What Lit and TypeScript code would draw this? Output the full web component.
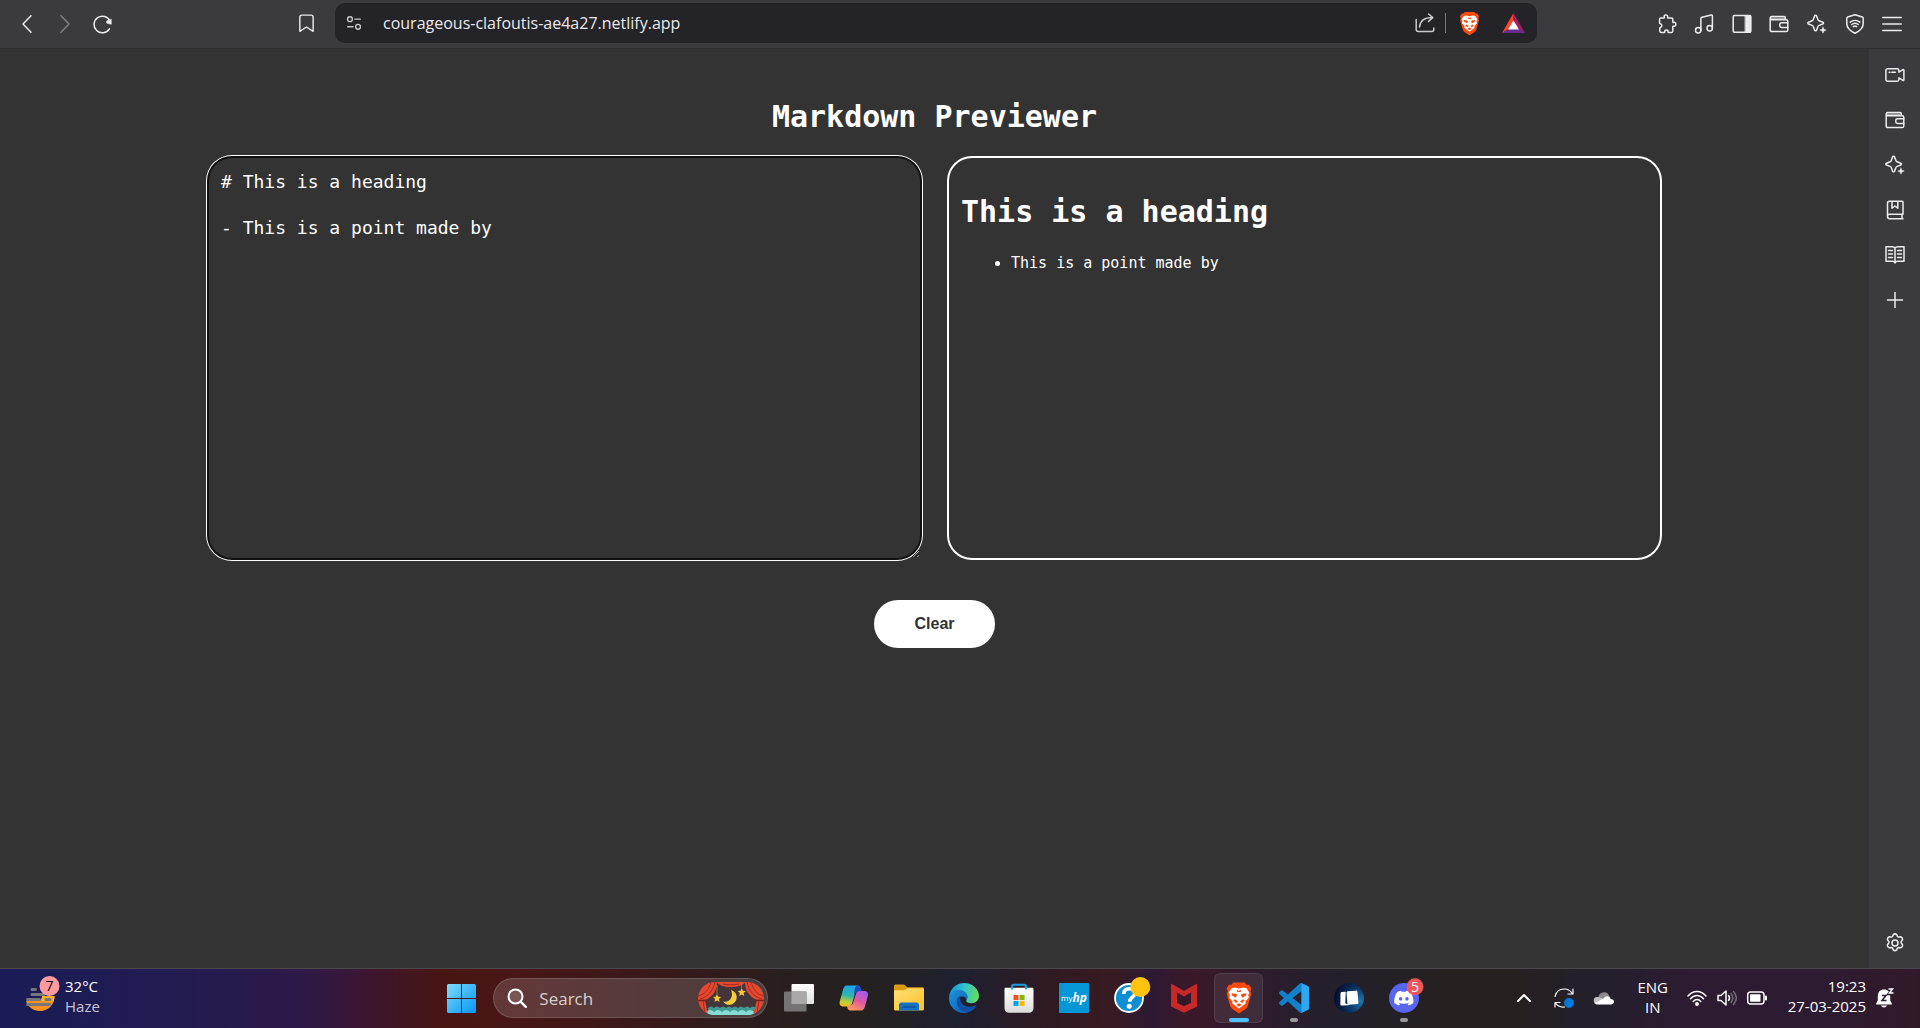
import { LitElement, html, svg, css } from "lit";
import { customElement, state } from "lit/decorators.js";

const line = (body: unknown, size = 20) => html`<svg
  class="line"
  width=${size}
  height=${size}
  viewBox="0 0 20 20"
  aria-hidden="true"
>${body}</svg>`;

const art = (body: unknown) => html`<svg
  class="art"
  width="30"
  height="30"
  viewBox="0 0 30 30"
  aria-hidden="true"
>${body}</svg>`;

const sparkle = svg`
  <path d="M8.6 1.2c.5 0 .8.3 1 .8l1.3 3.6c.2.6.6 1 1.2 1.200l3.700 1.400c.9.3.9 1.500 0 1.800l-3.700 1.400c-.6.2-1 .6-1.200 1.200l-1.300 3.600c-.4.9-1.600.9-2 0l-1.300-3.600c-.2-.6-.6-1-1.200-1.200l-3.600-1.400c-.9-.3-.9-1.500 0-1.800l3.600-1.400c.6-.2 1-.6 1.200-1.200l1.300-3.600c.2-.5.5-.8 1-.8z"/>
  <path class="solid" d="M16 13l.9 2.200 2.300.8-2.300.9-.9 2.300-.9-2.300-2.300-.9 2.300-.8z"/>`;

const wallet = svg`
  <path class="dim" d="M1.500 3.500h14.500v2.200h-14.500z"/>
  <path d="M1.200 4v11.800c0 1.100.7 1.800 1.700 1.800h14.200c1 0 1.700-.7 1.700-1.700v-8.400c0-1-.7-1.700-1.700-1.700h-14.200c-1 0-1.700-.6-1.700-1.600s.7-1.600 1.700-1.600h12c.9 0 1.500.6 1.500 1.500v1.500"/>
  <path d="M18.800 8.800h-6.300c-1 0-1.700.7-1.700 1.700v1.300c0 1 .7 1.700 1.700 1.700h6.300"/>`;

const lion = svg`
  <path d="M8.500 0h11l2.500 2.600 2.200-.3 2.200 3.700-1 2.500.9 3-3.700 12.500c-.3 1-1 1.800-2 2.500l-6.600 4.500-6.600-4.500c-1-.7-1.700-1.500-2-2.500l-3.700-12.500.9-3-1-2.500 2.200-3.700 2.200.3z" transform="translate(1 -.5)" fill="#fb4a0a"/>
  <path d="M7.500 5.200l3.400-.6 4.100 1 4.100-1 3.400.6 2.900 4.600-1.200 2 .6 3-3.300 3.400.2 2.200-6.700 5.200-6.700-5.200.2-2.200-3.300-3.400.6-3-1.200-2z" fill="#fff"/>
  <path d="M7.600 10.300l4.700.8.700 1.200-1.300 2.400-3.600-2.100zM22.400 10.300l-4.700.8-.7 1.200 1.300 2.400 3.600-2.100zM12.800 6.800l2.200 1.100 2.200-1.100-.6 2.300h-3.200zM11 16.200l3 2.200-2.500 1.900-.3-1.500-2-1.300zM19 16.200l-3 2.200 2.500 1.900.3-1.500 2-1.300zM12.300 21.800l2.700-1.500 2.700 1.500-2.700 2z" fill="#fb4a0a"/>`;

const toolIcons = [
  {
    name: "Extensions",
    body: svg`<path d="M3.400 4h3.600c.3 0 .5-.4.3-.8-.5-1.100.2-2.300 1.600-2.300s2.200 1.200 1.700 2.300c-.2.400 0 .8.400.8h3.500c.8 0 1.300.5 1.300 1.300v2.800c0 .4.4.6.8.4 1.100-.5 2.300.3 2.300 1.800s-1.200 2.300-2.300 1.800c-.4-.2-.8 0-.8.500v4.400c0 .8-.5 1.400-1.300 1.400h-3c-.4 0-.6-.4-.5-.8.300-1-.5-1.700-1.600-1.700s-1.900.7-1.600 1.700c.1.4-.1.800-.5.800h-3.200c-.8 0-1.300-.6-1.300-1.400v-2.800c0-.4.2-.7.600-.8.900-.2 1.400-.9 1.400-1.800s-.6-1.700-1.500-1.800c-.4-.1-.7-.4-.7-.9v-3.600c0-.8.400-1.300 1.200-1.300z"/>`,
  },
  {
    name: "Media playlist",
    body: svg`<circle cx="4.200" cy="16.300" r="2.700"/><circle cx="15.700" cy="14.200" r="2.700"/><path d="M6.900 16.300V4.400c0-.6.400-1 1-1.200l9.400-2.200c.7-.1 1.100.2 1.100.9v12.300"/>`,
  },
  {
    name: "Sidebar",
    body: svg`<rect x="1.200" y="1.500" width="17.600" height="16.800" rx="1.200"/><path class="solid" d="M13.200 1.500h5.600v16.800h-5.600z"/>`,
  },
  { name: "Wallet", body: wallet },
  { name: "Leo", body: sparkle },
  {
    name: "VPN",
    body: svg`<path d="M10 .7l7.300 2.300c.6.200.9.600.9 1.200v5.600c0 4.200-3.800 7.400-8.200 9.500-4.400-2.100-8.200-5.300-8.200-9.500v-5.600c0-.6.300-1 .9-1.200z"/><path d="M5.200 8.200c2.800-2.300 6.800-2.300 9.600 0M6.700 10.500c2-1.600 4.600-1.600 6.600 0M8.400 12.600c1-.8 2.200-.8 3.200 0"/>`,
  },
  { name: "Menu", body: svg`<path d="M.8 3.500h18.400M.8 10h18.400M.8 16.500h18.400"/>` },
];

const sideIcons = [
  {
    name: "Talk",
    body: svg`<path d="M2.600 3.700h9.600c1 0 1.700.7 1.700 1.700v1.800l4-2.500c.5-.3 1 0 1 .5v9.600c0 .5-.5.800-1 .5l-4-2.500v1.800c0 1-.7 1.700-1.700 1.700h-9.600c-1 0-1.700-.7-1.700-1.700v-9.200c0-1 .7-1.700 1.700-1.700z"/><path d="M4 7.300h1M6.800 7.300h3.600"/>`,
  },
  { name: "Brave Wallet", body: wallet },
  { name: "Leo AI", body: sparkle },
  {
    name: "Bookmarks",
    body: svg`<path d="M18 14.300V2.200c0-.6-.4-1-1-1h-12.500c-1.200 0-2 .8-2 2v13.400c0 1.200.8 2.100 2 2.100h13.500M18 14.300h-13.300c-1.200 0-2.200 1-2.200 2.200M17 14.300v4.400M7 1.200v7l2.900-2.200 2.900 2.200v-7"/>`,
  },
  {
    name: "Reading list",
    body: svg`<path d="M10 3.200c-.6-.9-1.300-1.400-2.500-1.400h-6.500v14.400h6.500c1.200 0 2 .6 2.500 1.800.5-1.200 1.300-1.800 2.500-1.800h6.500v-14.400h-6.500c-1.200 0-1.900.5-2.500 1.400zM10 3.200v14.500M3.500 5.500h4M3.500 9h4M3.500 12.500h4M12.500 5.500h4M12.500 9h4M12.500 12.500h4"/>`,
  },
  { name: "Add", body: svg`<path d="M10 2.500v15M2.500 10h15"/>` },
];

const apps = [
  {
    name: "Task view",
    body: svg`<rect x="7.500" y="1" width="22.500" height="20" rx="1" fill="url(#tv)"/><rect x="0" y="8.500" width="22.500" height="20" rx="1" fill="#757373"/><path d="M7.500 8.500h15v12.500h-15z" fill="#aaa8a8"/>
      <defs><linearGradient id="tv" x1="0" y1="0" x2="0" y2="1"><stop stop-color="#fff"/><stop offset="1" stop-color="#e0e0e0"/></linearGradient></defs>`,
  },
  {
    name: "Copilot",
    body: svg`<defs>
        <linearGradient id="c1" x1=".4" y1="0" x2=".2" y2="1"><stop stop-color="#1ea2ee"/><stop offset=".45" stop-color="#2bb6b0"/><stop offset=".75" stop-color="#b5cf3a"/><stop offset="1" stop-color="#f2bd1d"/></linearGradient>
        <linearGradient id="c2" x1=".8" y1="0" x2=".3" y2="1"><stop stop-color="#9c5cf0"/><stop offset=".5" stop-color="#e356a8"/><stop offset="1" stop-color="#ff9a5a"/></linearGradient></defs>
      <path d="M7.500 2.500h11c1.700 0 2.600 1 3 2.500l.9 3h-3.400c-1.600 0-2.500.8-3 2.400l-3 10c-.7 2.200-1.800 3.100-4 3.100h-4.500c-3.200 0-4.500-2.100-3.600-5.500l3-11c.8-2.900 1.900-4.500 3.600-4.500z" fill="url(#c1)"/>
      <path d="M17.500 2.500h1c1.700 0 2.600 1 3 2.500l.9 3h-3.400c-1.600 0-2.500.8-3 2.400l-.6 2c-.5-3-.3-7.300 2.100-9.900z" fill="#184cc4"/>
      <path d="M22.500 27.500h-11c-1.700 0-2.600-1-3-2.500l-.7-2.500h3c1.600 0 2.700-.9 3.200-2.500l3.100-9.600c.6-1.700 1.500-2.400 3.200-2.400h5c3.200 0 4.300 2.100 3.400 5.500l-2.600 9.500c-.8 2.900-1.900 4.500-3.600 4.500z" fill="url(#c2)"/>`,
  },
  {
    name: "File Explorer",
    body: svg`<path d="M0 3c0-.9.700-1.600 1.600-1.600h7.400c.8 0 1.300.2 1.900.7l2.100 2.200h15.400c.9 0 1.600.7 1.600 1.600v5h-30z" fill="#dc9a0d"/>
      <path d="M0 8.500c0-.8.500-1.300 1.300-1.300h8.500c.8 0 1.400-.2 2-.7l1.500-1.300h15.100c.9 0 1.600.7 1.600 1.600v19.200c0 1-.7 1.600-1.600 1.600h-26.800c-.9 0-1.600-.6-1.600-1.600z" fill="url(#fx)"/>
      <path d="M5 27.600v-5.500c0-1.700 1-2.600 2.600-2.600h14.800c1.600 0 2.600.9 2.600 2.600v5.500z" fill="#1272c4"/><path d="M8.500 24h13" stroke="#0a4b8f" stroke-width="1.300"/>
      <defs><linearGradient id="fx" x1="0" y1="0" x2="1" y2="1"><stop stop-color="#ffe17a"/><stop offset="1" stop-color="#fbbf24"/></linearGradient></defs>`,
  },
  {
    name: "Microsoft Edge",
    body: svg`<defs>
        <linearGradient id="e1" x1="0" y1=".4" x2="1" y2=".5"><stop stop-color="#1593d8"/><stop offset=".5" stop-color="#35c4cf"/><stop offset="1" stop-color="#62dc57"/></linearGradient>
        <linearGradient id="e2" x1="0" y1="0" x2="1" y2="1"><stop stop-color="#1c94dd"/><stop offset="1" stop-color="#0f5cae"/></linearGradient></defs>
      <path d="M.2 13.500c1-8 7-13.500 14.800-13.500 8.600 0 15 6.300 15 13 0 4.500-3.400 7.200-7.400 7.200-3.300 0-5.400-1.200-5.400-2.300 0-1 1.200-1.400 1.200-4 0-3.200-3.200-6-8.100-6-4.700 0-8.200 2.200-10.100 5.600z" fill="url(#e1)"/>
      <path d="M0 15.500c.2-5.700 4.300-8.700 9.500-8.700 5.300 0 8.900 3.300 8.900 7.100 0 1.200-.4 2.200-.9 3-.3-2-2-3.500-4.200-3.500-2.600 0-4.500 2.200-4.500 5.400 0 5.500 4.400 10.700 10.600 10.900-1.300.3-2.700.3-4.400.3-8.500 0-15-6.500-15-14.500z" fill="url(#e2)"/>
      <path d="M12 12.800c-2.600.3-4.200 2.800-4.200 6 0 5.500 4.300 9.600 9.500 10.900 4.500-.6 8-3.300 9.900-6.400.4-.7-.2-1.200-.8-.9-6 2.900-13.600.8-15-4.700-.5-1.900-.3-3.700.6-4.900z" fill="#1050a5"/>`,
  },
  {
    name: "Microsoft Store",
    body: svg`<path d="M8 7v-3.500c0-1.100.7-1.800 1.800-1.800h10.400c1.100 0 1.800.7 1.800 1.800v3.500" fill="none" stroke="#1b9de2" stroke-width="2"/>
      <path d="M.5 6c0-.7.5-1.200 1.200-1.200h26.600c.7 0 1.200.5 1.200 1.200v19c0 3-1.800 4.800-4.800 4.800h-19.400c-3 0-4.800-1.800-4.800-4.800z" fill="url(#ms)"/>
      <path d="M8 5v-1.500M22 5v-1.500M8 4v2.500M22 4v2.500" stroke="#1b9de2" stroke-width="2"/>
      <path d="M9.500 12h5v5h-5z" fill="#f25022"/><path d="M15.500 12h5v5h-5z" fill="#7fba00"/><path d="M9.500 18h5v5h-5z" fill="#00a4ef"/><path d="M15.500 18h5v5h-5z" fill="#ffb900"/>
      <defs><linearGradient id="ms" x1="0" y1="0" x2="0" y2="1"><stop stop-color="#fff"/><stop offset="1" stop-color="#dcdcdc"/></linearGradient></defs>`,
  },
  {
    name: "myHP",
    body: svg`<rect width="30" height="30" rx="1" fill="#0496d6"/><text x="2" y="18" class="my">my</text><text x="13.500" y="18.500" class="hp">hp</text>`,
  },
  {
    name: "HP Support Assistant",
    body: svg`<circle cx="15" cy="15" r="14" fill="#0e8ed2" stroke="#fff" stroke-width="1.800"/><path d="M9.800 11c0-3.400 2.300-5.200 5.600-5.200 3.200 0 5.400 1.700 5.400 4.400 0 3.900-5.200 4-5.200 8.500" fill="none" stroke="#fff" stroke-width="3.600"/><circle cx="15.200" cy="23.300" r="2.500" fill="#fff"/><circle cx="26.300" cy="4" r="10" fill="#ffc20e"/>`,
  },
  {
    name: "McAfee",
    body: svg`<path d="M2 .5l13 7.200 13-7.200v23l-13 6.300-13-6.300z" fill="#c62828"/><path d="M8 9.500l7 4 7-4v10.300l-7 3.400-7-3.400z" fill="#35182a"/>`,
  },
  { name: "Brave", body: lion, active: true },
  {
    name: "Visual Studio Code",
    running: true,
    body: svg`<g transform="scale(1.250)"><path fill="#1181cc" d="M23.150 2.587L18.210.210a1.494 1.494 0 0 0-1.705.290l-9.460 8.630-4.120-3.128a.999.999 0 0 0-1.276.057L.327 7.261A1 1 0 0 0 .326 8.740L3.899 12 .326 15.260a1 1 0 0 0 .001 1.479L1.650 17.940a.999.999 0 0 0 1.276.057l4.120-3.128 9.460 8.630a1.492 1.492 0 0 0 1.704.290l4.942-2.377A1.500 1.500 0 0 0 24 20.060V3.939a1.500 1.500 0 0 0-.850-1.352zm-5.146 14.861L10.826 12l7.178-5.448v10.896z"/><path fill="#2aa8f2" d="M18.004.150l5.146 2.437a1.500 1.500 0 0 1 .850 1.352v16.121a1.500 1.500 0 0 1-.850 1.352l-5.146 2.400z"/></g>`,
  },
  {
    name: "Phone Link",
    body: svg`<defs><radialGradient id="pl" cx=".9" cy=".6" r=".9"><stop stop-color="#1d78ac"/><stop offset=".5" stop-color="#0c3566"/><stop offset="1" stop-color="#060d2c"/></radialGradient></defs>
      <circle cx="15" cy="15" r="15" fill="url(#pl)"/><rect x="13" y="8" width="11" height="13.500" rx="1.500" transform="rotate(-5 18 15)" fill="#fff"/><path d="M6.500 10.500c0-.8.500-1.300 1.200-1.400l4-.3-.4 10.700c0 .8.500 1.400 1.300 1.400h2l-.2 1.300-6.500.4c-1 .1-1.600-.4-1.500-1.400z" fill="#fff"/>`,
  },
  {
    name: "Discord",
    running: true,
    body: svg`<circle cx="15" cy="15" r="15" fill="#5865f2"/><path fill="#fff" transform="translate(5.200 5.500) scale(.8)" d="M20.317 4.370a19.800 19.800 0 00-4.885-1.515c-.211.375-.445.865-.687 1.287-1.845-.276-3.680-.276-5.487 0-.164-.393-.406-.874-.696-1.287a19.736 19.736 0 00-4.885 1.515C.533 9.046-.319 13.580.099 18.058c2.053 1.508 4.041 2.423 6.108 3.058.462-.630.873-1.295 1.185-2.100-.653-.248-1.274-.550-1.880-1.020l.442-.302c3.928 1.793 8.180 1.793 12.139 0l.445.302a12.300 12.300 0 01-1.914 1.126c.360.698.772 1.363 1.309 2.022 1.961-.607 3.950-1.522 6.034-3.085.500-5.177-.838-9.674-3.580-13.689zM8.020 15.331c-1.183 0-2.157-1.086-2.157-2.419 0-1.333.956-2.419 2.157-2.419 1.211 0 2.176 1.095 2.157 2.419 0 1.333-.956 2.419-2.157 2.419zm7.975 0c-1.183 0-2.157-1.086-2.157-2.419 0-1.333.955-2.419 2.157-2.419 1.211 0 2.176 1.095 2.157 2.419 0 1.333-.946 2.419-2.157 2.419z"/>
      <circle cx="26" cy="3.700" r="8.500" fill="#ee5757"/><text x="26" y="9" text-anchor="middle" class="count">5</text>`,
  },
];

type Block = { kind: "heading" | "list" | "text"; lines: string[] };

function parse(source: string): Block[] {
  const blocks: Block[] = [];
  for (const raw of source.split("\n")) {
    const text = raw.trim();
    if (!text) continue;
    if (text.startsWith("# ")) {
      blocks.push({ kind: "heading", lines: [text.slice(2)] });
    } else if (text.startsWith("- ")) {
      const last = blocks[blocks.length - 1];
      if (last && last.kind === "list") last.lines.push(text.slice(2));
      else blocks.push({ kind: "list", lines: [text.slice(2)] });
    } else {
      blocks.push({ kind: "text", lines: [text] });
    }
  }
  return blocks;
}

@customElement("browser-toolbar")
export class BrowserToolbar extends LitElement {
  static styles = css`
    :host {
      display: grid;
      grid-template-columns: 335px 1fr 383px;
      height: 49px;
      padding-bottom: 1px;
      box-sizing: border-box;
      background: #3b3a3f;
      border-bottom: 1px solid #2e2e31;
      color: #ececee;
    }
    .nav, .address, .tools { display: flex; align-items: center; }
    .nav { padding: 0 10px 0 8px; }
    .bookmark { margin-left: auto; }
    button {
      display: flex;
      align-items: center;
      justify-content: center;
      width: 38px;
      height: 38px;
      padding: 0;
      border: 0;
      background: none;
      color: inherit;
    }
    button:disabled { color: #808084; }
    .line { fill: none; stroke: currentColor; stroke-width: 1.5; stroke-linejoin: round; stroke-linecap: round; }
    .solid { fill: currentColor; stroke-width: .5; }
    .dim { fill: #a3a2a8; stroke: none; }
    .address {
      margin: 3px 0 4px;
      border-radius: 10px;
      background: #242328;
      box-sizing: border-box;
      padding-right: 2px;
    }
    .address button { color: #c9c9cd; }
    .address .wide { width: 44px; }
    .url {
      flex: 1;
      min-width: 0;
      margin-left: 10px;
      padding: 0;
      border: 0;
      outline: 0;
      background: none;
      color: #e9e9ec;
      font: 16px "Open Sans", sans-serif;
    }
    .rule { width: 1px; height: 20px; background: #77767b; margin: 0 1px; }
    .tools {
      display: grid;
      grid-template-columns: repeat(7, 1fr);
      padding: 0 9px 0 111px;
    }
    .tools button { width: 100%; }
  `;

  render() {
    return html`
      <div class="nav">
        <button aria-label="Back">${line(svg`<path d="M14 1.800L6 10l8 8.200"/>`)}</button>
        <button aria-label="Forward" disabled>${line(svg`<path d="M6 1.800L14 10l-8 8.200"/>`)}</button>
        <button aria-label="Reload">
          ${line(svg`<path d="M17 7.300a8.300 8.300 0 1 0-.6 7.600"/><path class="solid" d="M18.300 5.500v4.800l-3.800-.8c-1.600-.5-1.500-2.400 0-3z"/>`)}
        </button>
        <button class="bookmark" aria-label="Bookmark">
          ${line(svg`<path d="M5 1.200h10c1.200 0 2 .8 2 2v15l-7-4.500-7 4.500v-15c0-1.200.8-2 2-2z"/>`, 19)}
        </button>
      </div>
      <div class="address">
        <button aria-label="Site settings">
          ${line(svg`<circle cx="5.500" cy="5.700" r="2.700"/><path d="M11 5.700h6M3 14.200h6"/><circle cx="14.500" cy="14.200" r="2.700"/>`, 18)}
        </button>
        <input class="url" aria-label="Address" value="courageous-clafoutis-ae4a27.netlify.app" />
        <button aria-label="Share">
          ${line(svg`<path d="M1.200 6.500v10c0 1.200.8 2 2 2h13.600c1.200 0 2-.8 2-2v-1.500M4.500 14c.6-5.800 4.500-9.400 12.500-9.400M13.600 1l4.200 3.600-4.200 3.800"/>`)}
        </button>
        <span class="rule"></span>
        <button class="wide" aria-label="Brave Shields">
          <svg width="23" height="23" viewBox="0 0 30 30" aria-hidden="true">${lion}</svg>
        </button>
        <button class="wide" aria-label="Brave Rewards">
          <svg width="23" height="20" viewBox="0 0 23 20" aria-hidden="true">
            <path d="M11.500 0L0 20l11.500-6.500z" fill="#ff4724"/><path d="M11.500 0L23 20l-11.500-6.500z" fill="#9e1f63"/><path d="M0 20h23l-11.500-7.500z" fill="#662d91"/><path d="M11.500 7.500L17 16.500h-11z" fill="#fff"/>
          </svg>
        </button>
      </div>
      <div class="tools">
        ${toolIcons.map((t) => html`<button aria-label=${t.name}>${line(t.body)}</button>`)}
      </div>
    `;
  }
}

@customElement("browser-sidebar")
export class BrowserSidebar extends LitElement {
  static styles = css`
    :host {
      display: flex;
      flex-direction: column;
      width: 51px;
      box-sizing: border-box;
      padding: 3px 0;
      background: #3b3a3f;
      color: #ececee;
    }
    button {
      display: flex;
      align-items: center;
      justify-content: center;
      height: 45px;
      padding: 0;
      border: 0;
      background: none;
      color: inherit;
    }
    .settings { margin-top: auto; }
    .line { fill: none; stroke: currentColor; stroke-width: 1.5; stroke-linejoin: round; stroke-linecap: round; }
    .solid { fill: currentColor; stroke-width: .5; }
    .dim { fill: #a3a2a8; stroke: none; }
  `;

  render() {
    return html`
      ${sideIcons.map((s) => html`<button aria-label=${s.name}>${line(s.body)}</button>`)}
      <button class="settings" aria-label="Settings">
        ${line(svg`<circle cx="10" cy="10" r="3"/><path d="M8.300 1.600c.9-.8 2.500-.8 3.400 0l.7 1.700c.3.500.8.800 1.400.7l1.900-.2c1.200.4 2 1.700 1.800 2.900l-1.200 1.700c-.3.500-.3 1.100 0 1.600l1.200 1.700 0 0c.3 1.300-.6 2.600-1.800 3l-1.900-.3c-.6 0-1.100.3-1.400.7l-.7 1.800c-.9.800-2.500.8-3.400 0l-.7-1.800c-.3-.4-.8-.7-1.400-.7l-1.900.3c-1.200-.4-2.100-1.700-1.800-3l1.200-1.700c.3-.5.3-1.100 0-1.600l-1.200-1.700c-.2-1.200.6-2.500 1.800-2.900l1.900.2c.6.100 1.100-.2 1.400-.7z"/>`)}
      </button>
    `;
  }
}

@customElement("markdown-previewer")
export class MarkdownPreviewer extends LitElement {
  @state() private source = "# This is a heading\n\n- This is a point made by";

  static styles = css`
    :host {
      display: flex;
      flex-direction: column;
      align-items: center;
      min-width: 0;
      box-sizing: border-box;
      padding: 49px 24px 24px;
      background: #333;
      color: #fff;
      font-family: "DejaVu Sans Mono", monospace;
    }
    h1 { margin: 0; font-size: 30px; line-height: 38px; }
    .panes {
      display: grid;
      grid-template-columns: 1fr 1fr;
      gap: 25px;
      width: 100%;
      max-width: 1455px;
      margin: 20px 0 40px;
    }
    .pane {
      height: 404px;
      box-sizing: border-box;
      padding: 12px;
      border: 2px solid #fff;
      border-radius: 25px;
    }
    .source {
      border-color: #101010;
      box-shadow: 0 0 0 1px #fff;
      outline: 0;
      background: #333;
      color: #fff;
      font: 18px/23px "DejaVu Sans Mono", monospace;
    }
    .preview { font-size: 15px; line-height: 19px; overflow: auto; }
    .preview h1 { margin: 23px 0; }
    ul { margin: 0; padding-left: 50px; }
    .clear {
      height: 48px;
      padding: 0 40px;
      border: 0;
      border-radius: 24px;
      background: #fff;
      color: #333;
      font: bold 16px "Liberation Sans", sans-serif;
    }
  `;

  render() {
    return html`
      <h1>Markdown Previewer</h1>
      <div class="panes">
        <textarea
          class="pane source"
          aria-label="Markdown source"
          spellcheck="false"
          .value=${this.source}
          @input=${(e: Event) => (this.source = (e.target as HTMLTextAreaElement).value)}
        ></textarea>
        <section class="pane preview">
          ${parse(this.source).map((b) =>
            b.kind === "heading"
              ? html`<h1>${b.lines[0]}</h1>`
              : b.kind === "list"
                ? html`<ul>${b.lines.map((l) => html`<li>${l}</li>`)}</ul>`
                : html`<p>${b.lines[0]}</p>`
          )}
        </section>
      </div>
      <button class="clear" @click=${() => (this.source = "")}>Clear</button>
    `;
  }
}

@customElement("desktop-taskbar")
export class DesktopTaskbar extends LitElement {
  static styles = css`
    :host {
      display: grid;
      grid-template-columns: 8fr auto 9fr;
      align-items: center;
      height: 60px;
      box-sizing: border-box;
      padding-bottom: 1px;
      border-top: 1px solid #4c474d;
      color: #fff;
      font: 15px/20px "Open Sans", sans-serif;
      background: linear-gradient(90deg, #191c57 0%, #231b50 10%, #2e1946 16%, #3b1631 19%, #481513 23%, #471616 27%, #341a1a 36%, #272020 42%, #252120 45%, #1f2030 50%, #301a22 55%, #381a22 58%, #2c1a33 60%, #3a1829 62%, #2c1c2c 66%, #23202b 70%, #262021 75%, #272021 79%, #231f2c 83%, #2d1b31 88%, #2d1b31 95%, #311a28 100%);
    }
    button {
      display: flex;
      align-items: center;
      justify-content: center;
      padding: 0;
      border: 0;
      background: none;
      color: inherit;
      font: inherit;
    }
    svg { overflow: visible; }
    .weather { align-items: flex-start; justify-content: flex-start; gap: 10px; padding: 0 0 4px 25px; text-align: left; }
    .place { display: block; color: #c6c3d6; }
    .badge { font: 14px "Open Sans", sans-serif; fill: #111; }
    .apps, .tray { display: flex; align-items: center; }
    .start { width: 55px; height: 50px; }
    .search {
      display: flex;
      align-items: center;
      width: 275px;
      height: 40px;
      box-sizing: border-box;
      margin: 0 3px 0 4px;
      padding: 0 3px 0 13px;
      border: 1px solid #ffffff26;
      border-radius: 20px;
      background: #ffffff26;
    }
    .query {
      flex: 1;
      min-width: 0;
      margin-left: 12px;
      padding: 0;
      border: 0;
      outline: 0;
      background: none;
      color: #fff;
      font: 17px "Open Sans", sans-serif;
    }
    .query::placeholder { color: #d8cfcf; opacity: 1; }
    .app { position: relative; width: 49px; height: 50px; margin: 0 3px; border: 1px solid transparent; border-radius: 6px; box-sizing: border-box; }
    .active { background: #ffffff14; border-color: #ffffff14; }
    .mark { position: absolute; bottom: 0; left: 50%; width: 8px; height: 4px; margin-left: -4px; border-radius: 2px; background: #9c999c; }
    .active .mark { width: 20px; margin-left: -10px; background: #4cc2ff; }
    .my { font: 8px "Open Sans", sans-serif; fill: #fff; }
    .hp { font: italic bold 12px "Open Sans", sans-serif; fill: #fff; }
    .count { font: 14px "Open Sans", sans-serif; fill: #fff; }
    .tray { justify-content: flex-end; padding-right: 17px; }
    .tray button { width: 40px; height: 50px; }
    .tray .lang { width: 58px; padding-bottom: 2px; }
    .tray .status { width: 90px; gap: 10px; padding: 0; }
    .tray .clock { width: auto; margin-left: 16px; padding-bottom: 4px; text-align: right; }
    .tray .bell { width: 37px; }
    .stroke { fill: none; stroke: currentColor; stroke-width: 1.5; stroke-linecap: round; stroke-linejoin: round; }
  `;

  render() {
    return html`
      <button class="weather">
        <svg width="30" height="36" viewBox="0 0 30 36" aria-hidden="true">
          <path d="M1 25c2 6 7.500 10 14 10 8.500 0 14.500-6.500 14.500-15h-12l-2 4z" fill="#f7931e"/>
          <path d="M17 20h12.500c0 2.500-.5 4-1 5.500h-11.500z" fill="#fbb02a"/>
          <path d="M7 13.500h3.500M7 18.500h12M2.500 23.500h12M21 23.500h4M2.500 28.500h22" stroke="#77767c" stroke-width="3" stroke-linecap="round"/>
          <circle cx="24.500" cy="10" r="10" fill="#ff9a9f"/>
          <text class="badge" x="24.500" y="15" text-anchor="middle">7</text>
        </svg>
        <span>32°C<span class="place">Haze</span></span>
      </button>
      <div class="apps">
        <button class="start" aria-label="Start">
          <svg width="29" height="29" viewBox="0 0 29 29" aria-hidden="true">
            <defs><linearGradient id="win" x1="0" y1="0" x2="29" y2="29" gradientUnits="userSpaceOnUse"><stop stop-color="#82dcff"/><stop offset=".5" stop-color="#3db8f8"/><stop offset="1" stop-color="#0a94ff"/></linearGradient></defs>
            <path d="M1 0h13v14h-14v-13zM15 0h13l1 1v13h-14zM0 15h14v14h-13l-1-1zM15 15h14v13l-1 1h-13z" fill="url(#win)"/>
          </svg>
        </button>
        <label class="search">
          <svg class="stroke" width="20" height="20" viewBox="0 0 20 20" aria-hidden="true"><circle cx="8.500" cy="8.500" r="7" stroke-width="2" fill="#ffffff26"/><path d="M13.800 13.800l5 5" stroke-width="2.400"/></svg>
          <input class="query" type="search" placeholder="Search" aria-label="Search" />
          <svg width="66" height="33" viewBox="0 0 66 33" aria-hidden="true">
            <defs><clipPath id="pill"><rect width="66" height="33" rx="16.500"/></clipPath></defs>
            <g clip-path="url(#pill)">
              <path d="M0 0h66v33h-66z" fill="#43353a"/>
              <path d="M10 26q3-3 6 0q3-3 6 0q3-3 6 0q3-3 6 0q3-3 6 0q3-3 6 0q3-3 6 0q3-3 6 0v8h-48z" fill="#3f9a94"/>
              <path d="M8 30q4-4 8 0q4-4 8 0q4-4 8 0q4-4 8 0q4-4 8 0q4-4 8 0v6h-48z" fill="#86dcd2"/>
              <path d="M0 0h19c0 8-4 15-12 18l3 15h-10zM66 0h-19c0 8 4 15 12 18l-4 15h11z" fill="#e2492f"/>
              <path d="M18 0h30c-3 3-8 5-15 5s-12-2-15-5z" fill="#e2492f"/>
              <path d="M0 14c6-1 11-6 13-14M2 17c8-2 13-8 15-17M5 18l2 15M66 14c-6-1-11-6-13-14M64 17c-8-2-13-8-15-17M61 18l-2 15M25 2c5 1 11 1 16 0" fill="none" stroke="#a52a1f"/>
              <path d="M0 18.500h9M57 18.500h9" stroke="#7c1c18" stroke-width="1.500"/>
              <path d="M33 8a7.500 7.500 0 1 1-8 11.500c7 1.500 11-5 8-11.500z" fill="#f7cf3c"/>
              <path d="M19 3v9M43.500 2v4" stroke="#b9923a" stroke-width=".7"/>
              <path d="M19 12l1.200 2.700 2.900.3-2.200 2 .6 2.900-2.500-1.500-2.500 1.500.6-2.900-2.200-2 2.900-.3zM43.700 6l1.200 2.700 2.900.3-2.200 2 .6 2.900-2.500-1.500-2.500 1.500.6-2.900-2.200-2 2.900-.3z" fill="#f9c630"/>
            </g>
          </svg>
        </label>
        ${apps.map(
          (a) => html`<button class="app ${a.active ? "active" : ""}" aria-label=${a.name}>
            ${art(a.body)}${a.active || a.running ? html`<span class="mark"></span>` : ""}
          </button>`
        )}
      </div>
      <div class="tray">
        <button aria-label="Show hidden icons">
          <svg class="stroke" width="14" height="8" viewBox="0 0 14 8" aria-hidden="true"><path d="M1 7l6-6 6 6" stroke-width="2"/></svg>
        </button>
        <button aria-label="Updates">
          <svg class="stroke" width="20" height="20" viewBox="0 0 20 20" aria-hidden="true"><path d="M1 8.500c1-4.500 4.500-7.500 9-7.500 4 0 7 2 8.500 5M19 1v5h-5M1 19v-4.500h5M1.500 15c2 3 5 4.500 9 4" stroke-width="1.200"/><circle cx="15" cy="15" r="5" fill="#0078d7" stroke="none"/></svg>
        </button>
        <button aria-label="OneDrive">
          <svg width="20" height="14" viewBox="0 0 20 14" aria-hidden="true"><path d="M4.500 7a5.500 5.500 0 0 1 10.500-2.500l2 3.500-11 4z" fill="#8d898d"/><path d="M3.500 13a3.500 3.500 0 0 1-.5-7c2-.4 4 .3 6 2l5 5z" fill="#c2c0c2"/><path d="M3.500 13.500c-1.500 0-2.500-.6-3-1.500l9-4.500c2-3 6-3 7 .5 2 0 3.500 1 3.500 2.800 0 1.600-1.200 2.700-3 2.700z" fill="#fff"/></svg>
        </button>
        <button class="lang">ENG<br />IN</button>
        <button class="status" aria-label="Network, volume and battery">
          <svg class="stroke" width="20" height="16" viewBox="0 0 20 16" aria-hidden="true"><path d="M1 6c5-6 13-6 18 0M3.500 8.800c3.800-4.400 9.200-4.400 13 0M6.200 11.400c2.200-2.600 5.400-2.600 7.600 0"/><circle cx="10" cy="14" r="1.200" fill="#fff"/></svg>
          <svg class="stroke" width="20" height="16" viewBox="0 0 20 16" aria-hidden="true"><path d="M1 5.500h3l5-4.500v14l-5-4.500h-3zM11.500 5.500c1.300 1.500 1.300 3.500 0 5"/><path d="M14 3.500c2.300 2.700 2.300 6.300 0 9M16.500 1.500c3.500 4 3.500 9 0 13" stroke="#77707a"/></svg>
          <svg class="stroke" width="20" height="14" viewBox="0 0 20 14" aria-hidden="true"><rect x=".7" y="1" width="16.300" height="12" rx="3"/><rect x="3" y="3.300" width="10.500" height="7.400" rx="1" fill="#fff" stroke="none"/><path d="M19 5.500v3" stroke-width="2"/></svg>
        </button>
        <button class="clock">19:23<br />27-03-2025</button>
        <button class="bell" aria-label="Notifications">
          <svg width="18" height="20" viewBox="0 0 18 20" aria-hidden="true"><path d="M8 1.500c-3.800 0-6.200 2.700-6.200 6.500v4.500l-1.600 3c-.2.500 0 1 .6 1h14.400c.6 0 .8-.5.6-1l-1.600-3v-4.500c0-3.800-2.200-6.500-6-6.500zM5 17.500h6c-.3 1.300-1.500 2-3 2s-2.700-.7-3-2z" fill="#fff"/><path d="M12.500.5h4.500l-3.500 5h4" stroke="#2d1b31" stroke-width="3.500" fill="none"/><path d="M12.500 1h4l-3 4h4" stroke="#fff" stroke-width="1.500" fill="none"/><path d="M6 7.500h4l-4 5h4.500" stroke="#2d1b31" stroke-width="1.500" fill="none"/></svg>
        </button>
      </div>
    `;
  }
}

@customElement("app-root")
export class AppRoot extends LitElement {
  static styles = css`
    :host {
      display: grid;
      grid-template-rows: auto 1fr auto;
      min-height: 100vh;
      background: #333;
    }
    .middle { display: grid; grid-template-columns: 1fr auto; }
  `;

  render() {
    return html`
      <browser-toolbar></browser-toolbar>
      <div class="middle">
        <markdown-previewer></markdown-previewer>
        <browser-sidebar></browser-sidebar>
      </div>
      <desktop-taskbar></desktop-taskbar>
    `;
  }
}
